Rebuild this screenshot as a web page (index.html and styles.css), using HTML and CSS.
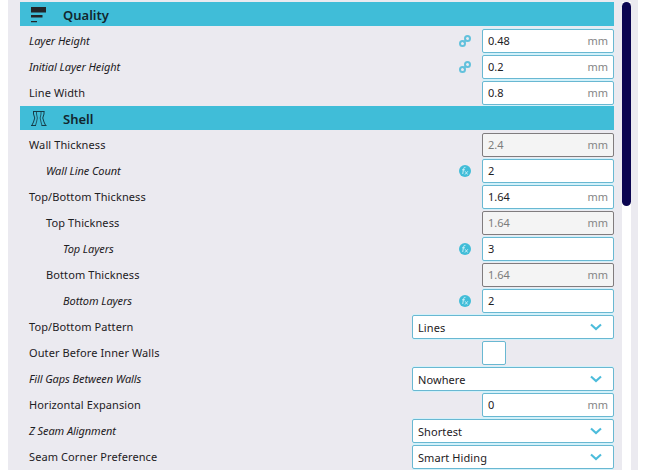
FILE: index.html
```
<!DOCTYPE html>
<html lang="en">
<head>
<meta charset="utf-8">
<title>Print settings</title>
<link rel="stylesheet" href="styles.css">
</head>
<body>
<svg class="defs" width="0" height="0">
  <symbol id="link" viewBox="0 0 12 12">
    <g fill="none" stroke="#62c1dc" stroke-width="2"><circle cx="3.5" cy="8.5" r="2.5"/><circle cx="8.5" cy="3.500" r="2.500"/><path d="M4.600 7.400 7.400 4.600" stroke-width="1.600"/></g>
  </symbol>
  <symbol id="fx" viewBox="0 0 12 12">
    <circle cx="6" cy="6" r="6" fill="#41bdd8"/>
    <path d="M6.500 2.300Q4.900 1.800 4.600 3.800L3.700 9M3 4.800h3M6.200 6.300l2.400 3.200M8.800 6.300 6 9.500" fill="none" stroke="#c4edf6" stroke-width="1"/>
  </symbol>
  <symbol id="chevron" viewBox="0 0 12 8">
    <path d="M1 1.400 6 6 11 1.400" fill="none" stroke="#4cbcdb" stroke-width="2.100"/>
  </symbol>
</svg>
<div class="panel">
  <main class="settings">
    <h2 class="category">
      <svg class="cat-icon" viewBox="0 0 16 16"><path d="M0 0h15v5.600H0zM0 8h11.500v2.600H0zM0 14h6v1.200H0z" fill="#222528"/></svg><span class="title">Quality</span></h2>
    <div class="row"><span class="label user">Layer Height</span><svg class="mark"><use href="#link"/></svg><div class="field">0.48<span class="unit">mm</span></div></div>
    <div class="row"><span class="label user">Initial Layer Height</span><svg class="mark"><use href="#link"/></svg><div class="field">0.2<span class="unit">mm</span></div></div>
    <div class="row"><span class="label">Line Width</span><div class="field">0.8<span class="unit">mm</span></div></div>
    <h2 class="category">
      <svg class="cat-icon" viewBox="0 0 16 16"><g fill="none" stroke="#163c48" stroke-width="1"><path d="M2 .5h11.500M0 14.500h5M10.500 14.500H15.500M2.500 .5V3Q5 7 2.500 11L.8 14.500M13 .5V3Q10.500 7 13 11l1.700 3.500"/><path d="M5.500 1v2Q7.200 7 5.500 11L4.500 14.500M10 1v2Q8.300 7 10 11L11 14.500" stroke-width=".8"/></g></svg><span class="title">Shell</span></h2>
    <div class="row"><span class="label">Wall Thickness</span><div class="field disabled">2.4<span class="unit">mm</span></div></div>
    <div class="row"><span class="label user level-1">Wall Line Count</span><svg class="mark"><use href="#fx"/></svg><div class="field">2</div></div>
    <div class="row"><span class="label">Top/Bottom Thickness</span><div class="field">1.64<span class="unit">mm</span></div></div>
    <div class="row"><span class="label level-1">Top Thickness</span><div class="field disabled">1.64<span class="unit">mm</span></div></div>
    <div class="row"><span class="label user level-2">Top Layers</span><svg class="mark"><use href="#fx"/></svg><div class="field">3</div></div>
    <div class="row"><span class="label level-1">Bottom Thickness</span><div class="field disabled">1.64<span class="unit">mm</span></div></div>
    <div class="row"><span class="label user level-2">Bottom Layers</span><svg class="mark"><use href="#fx"/></svg><div class="field">2</div></div>
    <div class="row"><span class="label">Top/Bottom Pattern</span><div class="field select">Lines<svg class="chevron"><use href="#chevron"/></svg></div></div>
    <div class="row"><span class="label">Outer Before Inner Walls</span><div class="check"></div></div>
    <div class="row"><span class="label user">Fill Gaps Between Walls</span><div class="field select">Nowhere<svg class="chevron"><use href="#chevron"/></svg></div></div>
    <div class="row"><span class="label">Horizontal Expansion</span><div class="field">0<span class="unit">mm</span></div></div>
    <div class="row"><span class="label user">Z Seam Alignment</span><div class="field select">Shortest<svg class="chevron"><use href="#chevron"/></svg></div></div>
    <div class="row"><span class="label">Seam Corner Preference</span><div class="field select">Smart Hiding<svg class="chevron"><use href="#chevron"/></svg></div></div>
  </main>
  <div class="scrollbar"><div class="thumb"></div></div>
</div>
</body>
</html>
```

FILE: styles.css
```
* { box-sizing: border-box; }
body {
  margin: 0;
  height: 470px;
  overflow: hidden;
  background: #fff;
  color: #1d2023;
  font: 11px/22px "Noto Sans", sans-serif;
}
.defs { display: block; }
.panel {
  display: flex;
  width: 630px;
  height: 470px;
  margin-left: 8px;
  padding: 2px 7px 0 12px;
  background: #ebeaf0;
}
.settings { width: 594px; }
.category {
  display: flex;
  align-items: center;
  height: 24px;
  margin: 0 0 2px;
  padding-left: 11px;
  background: #40bdd8;
  color: #12262e;
  font-size: 13px;
  font-weight: 600;
}
.cat-icon { width: 16px; height: 16px; margin: 2px 16px 0 0; }
.title { padding-top: 2px; }
.row {
  display: flex;
  align-items: center;
  height: 26px;
  padding-left: 9px;
}
.label { flex: 1; white-space: nowrap; letter-spacing: .1px; }
.user { font-style: italic; letter-spacing: -.08px; }
.level-1 { padding-left: 17px; }
.level-2 { padding-left: 34px; }
.mark { width: 12px; height: 12px; margin-right: 11px; }
.field {
  display: flex;
  align-items: center;
  justify-content: space-between;
  width: 132px;
  height: 24px;
  padding: 0 5px;
  border: 1px solid #69b8d2;
  border-radius: 2px;
  background: #fff;
  box-shadow: 0 1px #d3f1fa, 0 -1px #d3f1fa;
}
.unit { color: #858585; }
.disabled {
  border-color: #807c7e;
  background: #f4f4f4;
  color: #7c7c7c;
  box-shadow: none;
}
.select { width: 202px; padding: 1px 11px 0 5px; letter-spacing: .08px; }
.chevron { width: 12px; height: 8px; margin-top: -2px; }
.check {
  width: 24px;
  height: 24px;
  margin-right: 108px;
  border: 1px solid #69b8d2;
  border-radius: 2px;
  background: #fff;
}
.scrollbar { width: 9px; height: 468px; margin-left: 8px; background: #fff; }
.thumb { height: 204px; border-radius: 5px; background: #0b0551; }
```
